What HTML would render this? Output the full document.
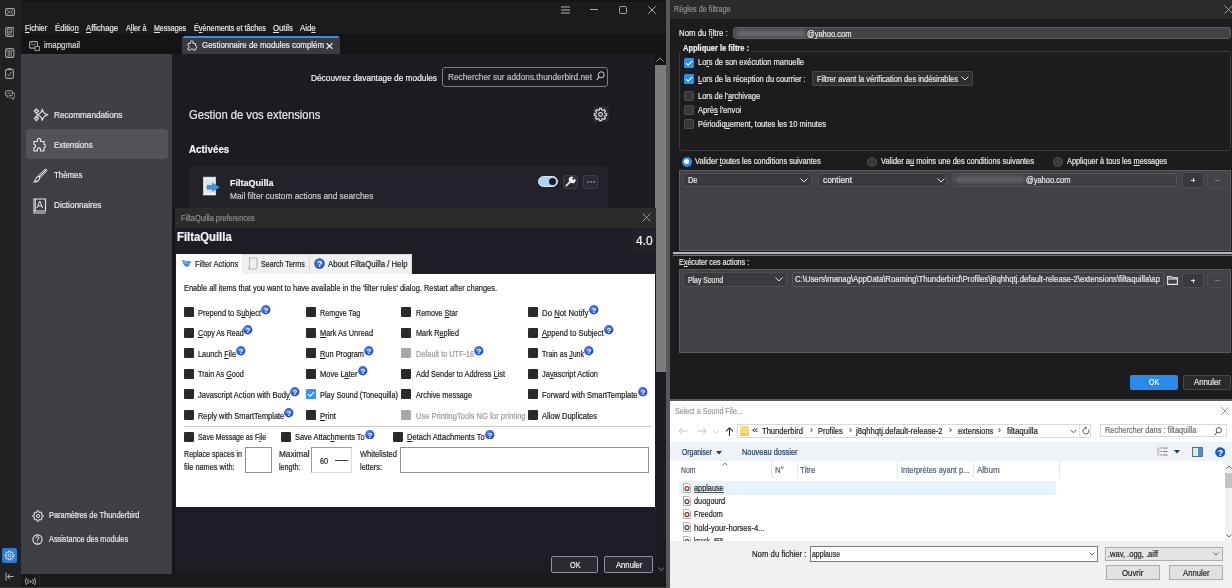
<!DOCTYPE html>
<html><head><meta charset="utf-8"><style>
html,body{margin:0;padding:0;width:1232px;height:588px;overflow:hidden;background:#1b1b1d;}
body>div,body>span,body>svg{position:absolute;box-sizing:border-box;}
.t{white-space:nowrap;-webkit-text-stroke:0.2px currentColor;line-height:1;transform-origin:0 0;font-family:"Liberation Sans",sans-serif;}
</style></head><body>
<div style="left:0px;top:0px;width:666px;height:588px;background:#1b1b1d;"></div>
<div style="left:0px;top:0px;width:666px;height:2px;background:#141416;"></div>
<div style="left:21px;top:34px;width:645px;height:20px;background:#141416;"></div>
<div style="left:0px;top:0px;width:21px;height:588px;background:#212123;"></div>
<svg style="left:4.5px;top:7.5px" width="10" height="8" viewBox="0 0 10 8"><rect x="0.6" y="0.6" width="8.8" height="6.8" rx="1.3" fill="none" stroke="#a4a4a6" stroke-width="1.1"/><path d="M2 2 L5 4.4 L8 2 M2 6 L3.8 4.3 M8 6 L6.2 4.3" stroke="#a4a4a6" stroke-width="0.9" fill="none"/></svg>
<svg style="left:4.5px;top:27px" width="9.5" height="10" viewBox="0 0 9.5 10"><rect x="0.6" y="0.6" width="8.3" height="8.8" rx="1.8" fill="none" stroke="#a4a4a6" stroke-width="1.1"/><path d="M2.6 2 V7.5 M2.6 2.2 H6.6 V6 M4.6 4.3 A1 1 0 1 0 4.61 4.3 M2.5 8 Q4.8 5.8 7 8" stroke="#a4a4a6" stroke-width="0.9" fill="none"/></svg>
<svg style="left:5px;top:48px" width="9.5" height="10" viewBox="0 0 9.5 10"><rect x="0.6" y="0.6" width="8.3" height="8.8" rx="2" fill="none" stroke="#a4a4a6" stroke-width="1.1"/><path d="M0.8 2.8 H8.7 M3.2 3 V8.5 M4.75 3 V8.5 M6.3 3 V8.5" stroke="#a4a4a6" stroke-width="0.8" fill="none"/></svg>
<svg style="left:5px;top:68px" width="9" height="11" viewBox="0 0 9 11"><rect x="0.6" y="1.4" width="7.8" height="9" rx="1.5" fill="none" stroke="#a4a4a6" stroke-width="1.1"/><rect x="2.8" y="0.3" width="3.4" height="2" rx="0.6" fill="#a4a4a6"/><path d="M2.6 6.2 L4 7.8 L6.4 3.8" stroke="#a4a4a6" stroke-width="0.9" fill="none"/></svg>
<svg style="left:4.5px;top:89.5px" width="10.5" height="10" viewBox="0 0 10.5 10"><path d="M1.2 0.8 H6.6 Q7.6 0.8 7.6 1.8 V4.6 Q7.6 5.6 6.6 5.6 H4 L2.3 7.3 V5.6 H1.2 Q0.6 5.6 0.6 4.8 V1.6 Q0.6 0.8 1.2 0.8 Z" fill="none" stroke="#a4a4a6" stroke-width="1"/><path d="M8.2 3 H9 Q9.8 3 9.8 3.8 V7 Q9.8 7.8 9 7.8 H8.4 V9.4 L6.6 7.8 H4.6" fill="none" stroke="#a4a4a6" stroke-width="0.9"/><path d="M2.2 3.2 H6" stroke="#a4a4a6" stroke-width="0.8"/></svg>
<div style="left:2px;top:548px;width:15px;height:15px;background:#2b7dd1;border-radius:2px"></div>
<svg style="left:4px;top:550px" width="11" height="11" viewBox="0 0 11 11"><path d="M4.70 2.30 L4.74 0.96 L6.26 0.96 L6.30 2.30 L7.20 2.67 L8.17 1.76 L9.24 2.83 L8.33 3.80 L8.70 4.70 L10.04 4.74 L10.04 6.26 L8.70 6.30 L8.33 7.20 L9.24 8.17 L8.17 9.24 L7.20 8.33 L6.30 8.70 L6.26 10.04 L4.74 10.04 L4.70 8.70 L3.80 8.33 L2.83 9.24 L1.76 8.17 L2.67 7.20 L2.30 6.30 L0.96 6.26 L0.96 4.74 L2.30 4.70 L2.67 3.80 L1.76 2.83 L2.83 1.76 L3.80 2.67 Z" fill="none" stroke="#d4e6f8" stroke-width="0.9" stroke-linejoin="round"/><circle cx="5.5" cy="5.5" r="1.4" fill="none" stroke="#d4e6f8" stroke-width="0.9"/></svg>
<svg style="left:5px;top:572px" width="9" height="9" viewBox="0 0 9 9"><path d="M1 0.5 V8.5 M2.5 4.5 H8.5 M2.5 4.5 L5 2 M2.5 4.5 L5 7" stroke="#b0b0b4" stroke-width="1" fill="none"/></svg>
<svg style="left:561px;top:6px" width="9" height="8" viewBox="0 0 9 8"><path d="M0 1 H9 M0 4 H9 M0 7 H9" stroke="#b4b4b6" stroke-width="1"/></svg>
<div style="left:590px;top:9px;width:8px;height:1px;background:#a8a8ab;"></div>
<svg style="left:619px;top:6px" width="8" height="8" viewBox="0 0 8 8"><rect x="0.5" y="0.5" width="7" height="7" rx="1" fill="none" stroke="#a8a8ab" stroke-width="1"/></svg>
<svg style="left:648px;top:6px" width="8" height="8" viewBox="0 0 8 8"><path d="M0.3 0.3 L7.7 7.7 M7.7 0.3 L0.3 7.7" stroke="#a8a8ab" stroke-width="1"/></svg>
<span id="t0" class="t" style="transform:scaleX(0.8606);left:25px;top:23.82px;font-size:8.6px;color:#e6e6e8;font-weight:400;font-family:"Liberation Sans", sans-serif;"><u>F</u>ichier</span>
<span id="t1" class="t" style="transform:scaleX(0.9018);left:54.7px;top:23.82px;font-size:8.6px;color:#e6e6e8;font-weight:400;font-family:"Liberation Sans", sans-serif;">Éditio<u>n</u></span>
<span id="t2" class="t" style="transform:scaleX(0.8967);left:86px;top:23.82px;font-size:8.6px;color:#e6e6e8;font-weight:400;font-family:"Liberation Sans", sans-serif;"><u>A</u>ffichage</span>
<span id="t3" class="t" style="transform:scaleX(0.8451);left:125.7px;top:23.82px;font-size:8.6px;color:#e6e6e8;font-weight:400;font-family:"Liberation Sans", sans-serif;">A<u>l</u>ler à</span>
<span id="t4" class="t" style="transform:scaleX(0.8191);left:153.9px;top:23.82px;font-size:8.6px;color:#e6e6e8;font-weight:400;font-family:"Liberation Sans", sans-serif;"><u>M</u>essages</span>
<span id="t5" class="t" style="transform:scaleX(0.8466);left:193.6px;top:23.82px;font-size:8.6px;color:#e6e6e8;font-weight:400;font-family:"Liberation Sans", sans-serif;">É<u>v</u>ènements et tâches</span>
<span id="t6" class="t" style="transform:scaleX(0.9006);left:273px;top:23.82px;font-size:8.6px;color:#e6e6e8;font-weight:400;font-family:"Liberation Sans", sans-serif;"><u>O</u>utils</span>
<span id="t7" class="t" style="transform:scaleX(0.9126);left:300.3px;top:23.82px;font-size:8.6px;color:#e6e6e8;font-weight:400;font-family:"Liberation Sans", sans-serif;">Aid<u>e</u></span>
<svg style="left:29px;top:41px" width="11" height="10" viewBox="0 0 11 10"><rect x="0.6" y="0.6" width="8" height="6.5" rx="1" fill="none" stroke="#a4a4a6" stroke-width="1.1"/><path d="M2 2.5 L4.6 4.3 L7.2 2.5" stroke="#a4a4a6" stroke-width="0.9" fill="none"/><rect x="6" y="5.5" width="4.5" height="4" fill="#141416" stroke="#a4a4a6" stroke-width="0.9"/></svg>
<span id="t8" class="t" style="transform:scaleX(0.9165);left:43.7px;top:41.22px;font-size:8.6px;color:#d8d8da;font-weight:400;font-family:"Liberation Sans", sans-serif;">imapgmail</span>
<div style="left:182px;top:36px;width:157.5px;height:18px;background:#3a3a41;border-radius:3px 3px 0 0"></div>
<div style="left:183px;top:36px;width:155.5px;height:2px;background:#3d8ee6;border-radius:2px 2px 0 0"></div>
<svg style="left:187px;top:40px" width="11" height="11" viewBox="0 0 11 11"><path d="M1 3.5 H3.5 V2 A1.2 1.2 0 0 1 6 2 V3.5 H8.5 V6 A1.2 1.2 0 0 1 8.5 8.5 V10 H6 A1.2 1.2 0 0 0 3.5 10 H1 V8 A1.2 1.2 0 0 0 1 5.5 Z" fill="none" stroke="#d8d8da" stroke-width="1"/></svg>
<span id="t9" class="t" style="transform:scaleX(0.9187);left:201.7px;top:41.32px;font-size:8.6px;color:#ececee;font-weight:400;font-family:"Liberation Sans", sans-serif;-webkit-mask-image:linear-gradient(90deg,#000 88%,transparent 100%);">Gestionnaire de modules complém</span>
<svg style="left:325.5px;top:42.5px" width="7" height="6" viewBox="0 0 7 6"><path d="M0.6 0.3 L6.4 5.7 M6.4 0.3 L0.6 5.7" stroke="#f0f0f2" stroke-width="1.3"/></svg>
<div style="left:21px;top:54px;width:151px;height:520px;background:#3f4046;"></div>
<div style="left:26px;top:129px;width:142px;height:30px;background:#525258;border-radius:4px"></div>
<svg style="left:30px;top:105px" width="20" height="20" viewBox="0 0 20 20"><path d="M12.3 4.200000000000001 Q13.200000000000001 8.9 17.9 9.8 Q13.200000000000001 10.700000000000001 12.3 15.4 Q11.4 10.700000000000001 6.700000000000001 9.8 Q11.4 8.9 12.3 4.200000000000001 Z" fill="none" stroke="#e8e8ea" stroke-width="1.1" stroke-linejoin="round"/><path d="M6.4 3.5999999999999996 Q6.9 5.6 8.9 6.1 Q6.9 6.6 6.4 8.6 Q5.9 6.6 3.9000000000000004 6.1 Q5.9 5.6 6.4 3.5999999999999996 Z" fill="none" stroke="#e8e8ea" stroke-width="1.1"/><path d="M6.4 11.0 Q6.9 13.0 8.9 13.5 Q6.9 14.0 6.4 16.0 Q5.9 14.0 3.9000000000000004 13.5 Q5.9 13.0 6.4 11.0 Z" fill="none" stroke="#e8e8ea" stroke-width="1.1"/></svg>
<span id="t10" class="t" style="transform:scaleX(0.9546);left:53.6px;top:110.52px;font-size:8.6px;color:#e8e8ea;font-weight:400;font-family:"Liberation Sans", sans-serif;">Recommandations</span>
<svg style="left:33px;top:137px" width="15" height="15" viewBox="0 0 15 15"><path d="M1 4.5 H4.5 V3 A1.6 1.6 0 0 1 7.7 3 V4.5 H11 V7.5 A1.6 1.6 0 0 1 11 10.7 V14 H7.5 V12.5 A1.6 1.6 0 0 0 4.3 12.5 V14 H1 V10.5 A1.6 1.6 0 0 0 1 7.3 Z" fill="none" stroke="#e8e8ea" stroke-width="1.1"/></svg>
<span id="t11" class="t" style="transform:scaleX(0.9180);left:53.6px;top:140.92px;font-size:8.6px;color:#e8e8ea;font-weight:400;font-family:"Liberation Sans", sans-serif;">Extensions</span>
<svg style="left:33px;top:168px" width="15" height="15" viewBox="0 0 15 15"><path d="M13.5 1.5 L6 9 M12.5 1 L14 2.5 L7 10 L5 8 Z" fill="none" stroke="#e8e8ea" stroke-width="1"/><path d="M5 8.5 Q3 9 2.5 12 L1 14 Q4 14 5.5 12.5 Q6.5 11.5 6.5 10" fill="none" stroke="#e8e8ea" stroke-width="1.1"/></svg>
<span id="t12" class="t" style="transform:scaleX(0.9147);left:53.6px;top:171.12px;font-size:8.6px;color:#e8e8ea;font-weight:400;font-family:"Liberation Sans", sans-serif;">Thèmes</span>
<svg style="left:33px;top:198px" width="14" height="16" viewBox="0 0 14 16"><path d="M1 1 H12.5 V13 H1 Z M1 13 V15 H12.5" fill="none" stroke="#e8e8ea" stroke-width="1.1"/><path d="M4 10 L6.8 3 L9.6 10 M5 8 H8.6" fill="none" stroke="#e8e8ea" stroke-width="1"/><path d="M2.5 1 V13" stroke="#e8e8ea" stroke-width="0.8"/></svg>
<span id="t13" class="t" style="transform:scaleX(0.9540);left:53.6px;top:201.22px;font-size:8.6px;color:#e8e8ea;font-weight:400;font-family:"Liberation Sans", sans-serif;">Dictionnaires</span>
<svg style="left:31.5px;top:509.5px" width="12" height="12" viewBox="0 0 12 12"><path d="M5.08 2.31 L5.15 0.87 L6.85 0.87 L6.92 2.31 L7.96 2.74 L9.02 1.77 L10.23 2.98 L9.26 4.04 L9.69 5.08 L11.13 5.15 L11.13 6.85 L9.69 6.92 L9.26 7.96 L10.23 9.02 L9.02 10.23 L7.96 9.26 L6.92 9.69 L6.85 11.13 L5.15 11.13 L5.08 9.69 L4.04 9.26 L2.98 10.23 L1.77 9.02 L2.74 7.96 L2.31 6.92 L0.87 6.85 L0.87 5.15 L2.31 5.08 L2.74 4.04 L1.77 2.98 L2.98 1.77 L4.04 2.74 Z" fill="none" stroke="#e8e8ea" stroke-width="1" stroke-linejoin="round"/><circle cx="6" cy="6" r="1.6" fill="none" stroke="#e8e8ea" stroke-width="1"/></svg>
<span id="t14" class="t" style="transform:scaleX(0.8624);left:48.5px;top:510.72px;font-size:8.6px;color:#e8e8ea;font-weight:400;font-family:"Liberation Sans", sans-serif;">Paramètres de Thunderbird</span>
<svg style="left:32px;top:534px" width="11" height="11" viewBox="0 0 11 11"><circle cx="5.5" cy="5.5" r="4.6" fill="none" stroke="#e8e8ea" stroke-width="1.1"/><path d="M4 4.2 Q4 2.6 5.5 2.6 Q7 2.6 7 4 Q7 5 5.5 5.6 V6.8 M5.5 7.8 V8.6" fill="none" stroke="#e8e8ea" stroke-width="1"/></svg>
<span id="t15" class="t" style="transform:scaleX(0.8535);left:48.5px;top:534.72px;font-size:8.6px;color:#e8e8ea;font-weight:400;font-family:"Liberation Sans", sans-serif;">Assistance des modules</span>
<div style="left:172px;top:54px;width:483px;height:520px;background:#1c1b22;"></div>
<span id="t16" class="t" style="transform:scaleX(0.9661);left:311px;top:73.72px;font-size:8.6px;color:#f0f0f2;font-weight:400;font-family:"Liberation Sans", sans-serif;">Découvrez davantage de modules</span>
<div style="left:442px;top:67px;width:166px;height:20px;background:#1c1b22;border:1px solid #7c7c86;border-radius:3px;"></div>
<span id="t17" class="t" style="transform:scaleX(0.9630);left:448px;top:73.32px;font-size:8.6px;color:#bdbdc4;font-weight:400;font-family:"Liberation Sans", sans-serif;">Rechercher sur addons.thunderbird.net</span>
<svg style="left:596px;top:71px" width="9" height="10" viewBox="0 0 9 10"><circle cx="5.2" cy="3.8" r="3" fill="none" stroke="#cfcfd4" stroke-width="1"/><path d="M3 6 L0.7 8.8" stroke="#cfcfd4" stroke-width="1.1"/></svg>
<span id="t18" class="t" style="transform:scaleX(0.9110);left:189px;top:108.79px;font-size:12.3px;color:#e6e6ea;font-weight:400;font-family:"Liberation Sans", sans-serif;-webkit-text-stroke:0">Gestion de vos extensions</span>
<div style="left:593px;top:106px;width:16px;height:16px;background:#2b2a33;border-radius:3px"></div>
<svg style="left:593px;top:107px" width="15" height="15" viewBox="0 0 15 15"><path d="M6.39 3.04 L6.48 1.38 L8.52 1.38 L8.61 3.04 L9.87 3.56 L11.10 2.46 L12.54 3.90 L11.44 5.13 L11.96 6.39 L13.62 6.48 L13.62 8.52 L11.96 8.61 L11.44 9.87 L12.54 11.10 L11.10 12.54 L9.87 11.44 L8.61 11.96 L8.52 13.62 L6.48 13.62 L6.39 11.96 L5.13 11.44 L3.90 12.54 L2.46 11.10 L3.56 9.87 L3.04 8.61 L1.38 8.52 L1.38 6.48 L3.04 6.39 L3.56 5.13 L2.46 3.90 L3.90 2.46 L5.13 3.56 Z" fill="none" stroke="#e0e0e4" stroke-width="1.1" stroke-linejoin="round"/><circle cx="7.5" cy="7.5" r="1.9" fill="none" stroke="#e0e0e4" stroke-width="1.1"/></svg>
<span id="t19" class="t" style="transform:scaleX(0.9328);left:189px;top:143.51px;font-size:10.5px;color:#f4f4f6;font-weight:700;font-family:"Liberation Sans", sans-serif;">Activées</span>
<div style="left:189px;top:166px;width:419px;height:42px;background:#23222b;border-radius:4px 4px 0 0"></div>
<svg style="left:202px;top:176px" width="19" height="20" viewBox="0 0 19 20"><path d="M1 1.2 H14 L13.5 2 V18 L14 19 H1 L1.5 18 V2 Z" fill="#f4f8f8" stroke="#e8eeee" stroke-width="0.6"/><rect x="2.8" y="2.8" width="9.6" height="14.4" fill="#d9e5e5"/><path d="M5 9.3 H10.5 V7 L17.6 11.3 L10.5 15.6 V13.3 H5 Z" fill="#3d93e0" stroke="#2f7fcc" stroke-width="0.5"/></svg>
<span id="t20" class="t" style="transform:scaleX(0.9355);left:229.8px;top:178.27px;font-size:9.6px;color:#f2f2f4;font-weight:700;font-family:"Liberation Sans", sans-serif;">FiltaQuilla</span>
<span id="t21" class="t" style="transform:scaleX(0.9684);left:229.8px;top:191.82px;font-size:8.6px;color:#c8c8ce;font-weight:400;font-family:"Liberation Sans", sans-serif;">Mail filter custom actions and searches</span>
<div style="left:537.5px;top:176.3px;width:20.5px;height:10.7px;background:#a9d2f9;border-radius:6px;border:1px solid #d6eafc"></div>
<div style="left:549.1px;top:178px;width:7.2px;height:7.2px;background:#1c1b22;border-radius:50%"></div>
<div style="left:563px;top:174.5px;width:15px;height:14.5px;background:#2b2a33;border-radius:3px;border:1px solid #3f3e47"></div>
<svg style="left:565px;top:176px" width="11" height="11" viewBox="0 0 11 11"><path d="M1.2 9.8 L5.6 5.4" stroke="#f0f0f2" stroke-width="1.6" stroke-linecap="round"/><path d="M5 6 A3 3 0 0 1 8.6 1.2 L7 2.8 L8.2 4 L9.8 2.4 A3 3 0 0 1 5 6 Z" fill="#f0f0f2"/></svg>
<div style="left:583px;top:174.5px;width:15px;height:14.5px;background:#2b2a33;border-radius:3px;border:1px solid #3f3e47"></div>
<svg style="left:587px;top:181px" width="8" height="2" viewBox="0 0 8 2"><circle cx="1" cy="1" r="0.7" fill="#e0e0e4"/><circle cx="4" cy="1" r="0.7" fill="#e0e0e4"/><circle cx="7" cy="1" r="0.7" fill="#e0e0e4"/></svg>
<div style="left:655px;top:54px;width:11px;height:11px;background:#141416;"></div>
<div style="left:655px;top:372px;width:11px;height:202px;background:#1c1b22;"></div>
<div style="left:655px;top:65px;width:11px;height:307px;background:#7b7b7f;"></div>
<svg style="left:656px;top:57px" width="8" height="5" viewBox="0 0 8 5"><path d="M0.5 4.5 L4 1 L7.5 4.5" fill="none" stroke="#9a9a9e" stroke-width="1"/></svg>
<svg style="left:657.5px;top:566.5px" width="6.5" height="4.5" viewBox="0 0 6.5 4.5"><path d="M0.5 0.5 L3.25 3.6 L6 0.5" fill="none" stroke="#8a8a8e" stroke-width="0.9"/></svg>
<div style="left:662.5px;top:575px;width:1px;height:11px;background:#2a2a2e;"></div>
<div style="left:665.5px;top:0px;width:3.5px;height:588px;background:#58585b;"></div>
<div style="left:21px;top:574px;width:645px;height:13px;background:#19191b;"></div>
<div style="left:0px;top:587px;width:666px;height:1px;background:#3a3a3c;"></div>
<div style="left:39px;top:574px;width:1px;height:14px;background:#2a2a2e;"></div>
<svg style="left:24px;top:577px" width="13" height="9" viewBox="0 0 13 9"><circle cx="6.5" cy="4.5" r="1.1" fill="#c0c0c4"/><path d="M4.3 2 Q3 4.5 4.3 7 M8.7 2 Q10 4.5 8.7 7 M2.4 0.8 Q0.5 4.5 2.4 8.2 M10.6 0.8 Q12.5 4.5 10.6 8.2" fill="none" stroke="#c0c0c4" stroke-width="0.9"/></svg>
<div style="left:172px;top:208px;width:3px;height:366px;background:#161618;"></div>
<div style="left:175px;top:208px;width:481px;height:20px;background:#2b2b2b;"></div>
<span id="t22" class="t" style="transform:scaleX(0.8583);left:181.2px;top:213.72px;font-size:8.6px;color:#8e8e8e;font-weight:400;font-family:"Liberation Sans", sans-serif;-webkit-text-stroke:0">FiltaQuilla preferences</span>
<svg style="left:642px;top:213px" width="9" height="9" viewBox="0 0 9 9"><path d="M0.5 0.5 L8.5 8.5 M8.5 0.5 L0.5 8.5" stroke="#9a9a9a" stroke-width="1"/></svg>
<div style="left:175px;top:228px;width:481px;height:346px;background:#1e1d25;"></div>
<span id="t23" class="t" style="transform:scaleX(0.9428);left:176.5px;top:231.34px;font-size:12px;color:#f4f4f6;font-weight:700;font-family:"Liberation Sans", sans-serif;">FiltaQuilla</span>
<div style="left:633px;top:228px;width:22px;height:23px;background:#23222a;"></div>
<span id="t24" class="t" style="transform:scaleX(0.9702);left:635.7px;top:235.19px;font-size:12.3px;color:#f4f4f6;font-weight:400;font-family:"Liberation Sans", sans-serif;">4.0</span>
<div style="left:176px;top:254px;width:66px;height:20px;background:#ffffff;"></div>
<div style="left:242px;top:254px;width:67.5px;height:20px;background:#f0f0f0;border-top:1px solid #dadada;border-right:1px solid #dadada"></div>
<div style="left:309.5px;top:254px;width:102.3px;height:20px;background:#f0f0f0;border-top:1px solid #dadada;border-right:1px solid #dadada"></div>
<svg style="left:181px;top:259px" width="11" height="9" viewBox="0 0 11 9"><path d="M0.5 1.5 Q3 0 5 2.5 Q7 1 10.5 3 L8.5 4.5 Q9 7 6 8 Q3 7.5 2.5 5 Z" fill="#3b95d6"/><path d="M1 1.5 Q4 4 6.5 4.5" stroke="#a8d4f2" stroke-width="0.8" fill="none"/></svg>
<span id="t25" class="t" style="transform:scaleX(0.8800);left:194.5px;top:260.12px;font-size:8.6px;color:#1e1e1e;font-weight:400;font-family:"Liberation Sans", sans-serif;">Filter Actions</span>
<svg style="left:247px;top:257px" width="11" height="13" viewBox="0 0 11 13"><path d="M2 1 H10 V11 Q10 12 9 12 H1.5 Q2.5 11.5 2.5 10.5 V1.5 Z" fill="#eef3f1" stroke="#9aaba4" stroke-width="0.8"/><path d="M1 10.5 H2.5" stroke="#9aaba4" stroke-width="0.8"/></svg>
<span id="t26" class="t" style="transform:scaleX(0.8267);left:261px;top:260.12px;font-size:8.6px;color:#1e1e1e;font-weight:400;font-family:"Liberation Sans", sans-serif;">Search Terms</span>
<svg style="left:314px;top:258px" width="11" height="11" viewBox="0 0 11 11"><circle cx="5.5" cy="5.5" r="5.2" fill="#1f4cc0"/><circle cx="5.2" cy="5" r="4" fill="#3a6ddc"/><text x="5.5" y="8.8" text-anchor="middle" font-family="Liberation Sans" font-weight="700" font-size="8.5" fill="#fff">?</text></svg>
<span id="t27" class="t" style="transform:scaleX(0.9045);left:328px;top:260.12px;font-size:8.6px;color:#1e1e1e;font-weight:400;font-family:"Liberation Sans", sans-serif;">About FiltaQuilla / Help</span>
<div style="left:176px;top:273.5px;width:479px;height:233px;background:#ffffff;"></div>
<span id="t28" class="t" style="transform:scaleX(0.8645);left:184px;top:283.92px;font-size:8.6px;color:#1e1e1e;font-weight:400;font-family:"Liberation Sans", sans-serif;">Enable all items that you want to have available in the 'filter rules' dialog. Restart after changes.</span>
<div style="left:184px;top:307px;width:10px;height:10px;background:#2a2a2c;border-radius:1px"></div>
<span id="t29" class="t" style="transform:scaleX(0.8617);left:197.6px;top:308.72px;font-size:8.6px;color:#1e1e1e;font-weight:400;font-family:"Liberation Sans", sans-serif;">Prepend to S<u>u</u>bject</span>
<svg style="left:261px;top:305px" width="9.5" height="9.5" viewBox="0 0 10 10"><defs><radialGradient id="qg1" cx="0.4" cy="0.35" r="0.65"><stop offset="0" stop-color="#5b8cf0"/><stop offset="1" stop-color="#1c46bd"/></radialGradient></defs><circle cx="5" cy="5" r="4.9" fill="url(#qg1)"/><text x="5.1" y="8.3" text-anchor="middle" font-family="Liberation Sans" font-weight="700" font-size="8.4" fill="#fff">?</text></svg>
<div style="left:184px;top:328px;width:10px;height:10px;background:#2a2a2c;border-radius:1px"></div>
<span id="t30" class="t" style="transform:scaleX(0.8334);left:197.6px;top:329.22px;font-size:8.6px;color:#1e1e1e;font-weight:400;font-family:"Liberation Sans", sans-serif;"><u>C</u>opy As Read</span>
<svg style="left:243px;top:325px" width="9.5" height="9.5" viewBox="0 0 10 10"><defs><radialGradient id="qg2" cx="0.4" cy="0.35" r="0.65"><stop offset="0" stop-color="#5b8cf0"/><stop offset="1" stop-color="#1c46bd"/></radialGradient></defs><circle cx="5" cy="5" r="4.9" fill="url(#qg2)"/><text x="5.1" y="8.3" text-anchor="middle" font-family="Liberation Sans" font-weight="700" font-size="8.4" fill="#fff">?</text></svg>
<div style="left:184px;top:348px;width:10px;height:10px;background:#2a2a2c;border-radius:1px"></div>
<span id="t31" class="t" style="transform:scaleX(0.8548);left:197.6px;top:349.82px;font-size:8.6px;color:#1e1e1e;font-weight:400;font-family:"Liberation Sans", sans-serif;">Launch <u>F</u>ile</span>
<svg style="left:236px;top:346px" width="9.5" height="9.5" viewBox="0 0 10 10"><defs><radialGradient id="qg3" cx="0.4" cy="0.35" r="0.65"><stop offset="0" stop-color="#5b8cf0"/><stop offset="1" stop-color="#1c46bd"/></radialGradient></defs><circle cx="5" cy="5" r="4.9" fill="url(#qg3)"/><text x="5.1" y="8.3" text-anchor="middle" font-family="Liberation Sans" font-weight="700" font-size="8.4" fill="#fff">?</text></svg>
<div style="left:184px;top:369px;width:10px;height:10px;background:#2a2a2c;border-radius:1px"></div>
<span id="t32" class="t" style="transform:scaleX(0.8384);left:197.6px;top:370.22px;font-size:8.6px;color:#1e1e1e;font-weight:400;font-family:"Liberation Sans", sans-serif;">Train As <u>G</u>ood</span>
<div style="left:184px;top:389px;width:10px;height:10px;background:#2a2a2c;border-radius:1px"></div>
<span id="t33" class="t" style="transform:scaleX(0.8815);left:197.6px;top:390.72px;font-size:8.6px;color:#1e1e1e;font-weight:400;font-family:"Liberation Sans", sans-serif;">Javascript Action with Bod<u>y</u></span>
<svg style="left:290px;top:387px" width="9.5" height="9.5" viewBox="0 0 10 10"><defs><radialGradient id="qg4" cx="0.4" cy="0.35" r="0.65"><stop offset="0" stop-color="#5b8cf0"/><stop offset="1" stop-color="#1c46bd"/></radialGradient></defs><circle cx="5" cy="5" r="4.9" fill="url(#qg4)"/><text x="5.1" y="8.3" text-anchor="middle" font-family="Liberation Sans" font-weight="700" font-size="8.4" fill="#fff">?</text></svg>
<div style="left:184px;top:410px;width:10px;height:10px;background:#2a2a2c;border-radius:1px"></div>
<span id="t34" class="t" style="transform:scaleX(0.8635);left:197.6px;top:411.72px;font-size:8.6px;color:#1e1e1e;font-weight:400;font-family:"Liberation Sans", sans-serif;">Reply with SmartTemplate</span>
<svg style="left:284px;top:408px" width="9.5" height="9.5" viewBox="0 0 10 10"><defs><radialGradient id="qg5" cx="0.4" cy="0.35" r="0.65"><stop offset="0" stop-color="#5b8cf0"/><stop offset="1" stop-color="#1c46bd"/></radialGradient></defs><circle cx="5" cy="5" r="4.9" fill="url(#qg5)"/><text x="5.1" y="8.3" text-anchor="middle" font-family="Liberation Sans" font-weight="700" font-size="8.4" fill="#fff">?</text></svg>
<div style="left:306px;top:307px;width:10px;height:10px;background:#2a2a2c;border-radius:1px"></div>
<span id="t35" class="t" style="transform:scaleX(0.8356);left:319.9px;top:308.72px;font-size:8.6px;color:#1e1e1e;font-weight:400;font-family:"Liberation Sans", sans-serif;">Rem<u>o</u>ve Tag</span>
<div style="left:306px;top:328px;width:10px;height:10px;background:#2a2a2c;border-radius:1px"></div>
<span id="t36" class="t" style="transform:scaleX(0.8598);left:319.9px;top:329.22px;font-size:8.6px;color:#1e1e1e;font-weight:400;font-family:"Liberation Sans", sans-serif;"><u>M</u>ark As Unread</span>
<div style="left:306px;top:348px;width:10px;height:10px;background:#2a2a2c;border-radius:1px"></div>
<span id="t37" class="t" style="transform:scaleX(0.8606);left:319.9px;top:349.82px;font-size:8.6px;color:#1e1e1e;font-weight:400;font-family:"Liberation Sans", sans-serif;"><u>R</u>un Program</span>
<svg style="left:364px;top:346px" width="9.5" height="9.5" viewBox="0 0 10 10"><defs><radialGradient id="qg6" cx="0.4" cy="0.35" r="0.65"><stop offset="0" stop-color="#5b8cf0"/><stop offset="1" stop-color="#1c46bd"/></radialGradient></defs><circle cx="5" cy="5" r="4.9" fill="url(#qg6)"/><text x="5.1" y="8.3" text-anchor="middle" font-family="Liberation Sans" font-weight="700" font-size="8.4" fill="#fff">?</text></svg>
<div style="left:306px;top:369px;width:10px;height:10px;background:#2a2a2c;border-radius:1px"></div>
<span id="t38" class="t" style="transform:scaleX(0.8721);left:319.9px;top:370.22px;font-size:8.6px;color:#1e1e1e;font-weight:400;font-family:"Liberation Sans", sans-serif;">Move L<u>a</u>ter</span>
<svg style="left:358px;top:366px" width="9.5" height="9.5" viewBox="0 0 10 10"><defs><radialGradient id="qg7" cx="0.4" cy="0.35" r="0.65"><stop offset="0" stop-color="#5b8cf0"/><stop offset="1" stop-color="#1c46bd"/></radialGradient></defs><circle cx="5" cy="5" r="4.9" fill="url(#qg7)"/><text x="5.1" y="8.3" text-anchor="middle" font-family="Liberation Sans" font-weight="700" font-size="8.4" fill="#fff">?</text></svg>
<div style="left:306px;top:389px;width:10px;height:10px;background:#3393f0;border-radius:1px"></div>
<svg style="left:306px;top:389px" width="10" height="10" viewBox="0 0 10 10"><path d="M2 5.2 L4.1 7.3 L8.2 2.8" fill="none" stroke="#fff" stroke-width="1.1"/></svg>
<span id="t39" class="t" style="transform:scaleX(0.8592);left:319.9px;top:390.72px;font-size:8.6px;color:#1e1e1e;font-weight:400;font-family:"Liberation Sans", sans-serif;">Play Sound (Tonequilla)</span>
<div style="left:306px;top:410px;width:10px;height:10px;background:#2a2a2c;border-radius:1px"></div>
<span id="t40" class="t" style="transform:scaleX(0.9046);left:319.9px;top:411.72px;font-size:8.6px;color:#1e1e1e;font-weight:400;font-family:"Liberation Sans", sans-serif;"><u>P</u>rint</span>
<div style="left:401px;top:307px;width:10px;height:10px;background:#2a2a2c;border-radius:1px"></div>
<span id="t41" class="t" style="transform:scaleX(0.8274);left:415.5px;top:308.72px;font-size:8.6px;color:#1e1e1e;font-weight:400;font-family:"Liberation Sans", sans-serif;">Remove <u>S</u>tar</span>
<div style="left:401px;top:328px;width:10px;height:10px;background:#2a2a2c;border-radius:1px"></div>
<span id="t42" class="t" style="transform:scaleX(0.8489);left:415.5px;top:329.22px;font-size:8.6px;color:#1e1e1e;font-weight:400;font-family:"Liberation Sans", sans-serif;">Mark R<u>e</u>plied</span>
<div style="left:401px;top:348px;width:10px;height:10px;background:#a8a8a8;border-radius:1px"></div>
<span id="t43" class="t" style="transform:scaleX(0.8492);left:415.5px;top:349.82px;font-size:8.6px;color:#9a9a9a;font-weight:400;font-family:"Liberation Sans", sans-serif;">Default to UTF-16</span>
<svg style="left:474px;top:346px" width="9.5" height="9.5" viewBox="0 0 10 10"><defs><radialGradient id="qg8" cx="0.4" cy="0.35" r="0.65"><stop offset="0" stop-color="#5b8cf0"/><stop offset="1" stop-color="#1c46bd"/></radialGradient></defs><circle cx="5" cy="5" r="4.9" fill="url(#qg8)"/><text x="5.1" y="8.3" text-anchor="middle" font-family="Liberation Sans" font-weight="700" font-size="8.4" fill="#fff">?</text></svg>
<div style="left:401px;top:369px;width:10px;height:10px;background:#2a2a2c;border-radius:1px"></div>
<span id="t44" class="t" style="transform:scaleX(0.8545);left:415.5px;top:370.22px;font-size:8.6px;color:#1e1e1e;font-weight:400;font-family:"Liberation Sans", sans-serif;">Add Sender to Address <u>L</u>ist</span>
<div style="left:401px;top:389px;width:10px;height:10px;background:#2a2a2c;border-radius:1px"></div>
<span id="t45" class="t" style="transform:scaleX(0.8495);left:415.5px;top:390.72px;font-size:8.6px;color:#1e1e1e;font-weight:400;font-family:"Liberation Sans", sans-serif;">Archive message</span>
<div style="left:401px;top:410px;width:10px;height:10px;background:#a8a8a8;border-radius:1px"></div>
<span id="t46" class="t" style="transform:scaleX(0.8750);left:415.5px;top:411.72px;font-size:8.6px;color:#9a9a9a;font-weight:400;font-family:"Liberation Sans", sans-serif;">Use PrintingTools NG for printing</span>
<div style="left:528px;top:307px;width:10px;height:10px;background:#2a2a2c;border-radius:1px"></div>
<span id="t47" class="t" style="transform:scaleX(0.9076);left:542.2px;top:308.72px;font-size:8.6px;color:#1e1e1e;font-weight:400;font-family:"Liberation Sans", sans-serif;">Do <u>N</u>ot Notify</span>
<svg style="left:589px;top:305px" width="9.5" height="9.5" viewBox="0 0 10 10"><defs><radialGradient id="qg9" cx="0.4" cy="0.35" r="0.65"><stop offset="0" stop-color="#5b8cf0"/><stop offset="1" stop-color="#1c46bd"/></radialGradient></defs><circle cx="5" cy="5" r="4.9" fill="url(#qg9)"/><text x="5.1" y="8.3" text-anchor="middle" font-family="Liberation Sans" font-weight="700" font-size="8.4" fill="#fff">?</text></svg>
<div style="left:528px;top:328px;width:10px;height:10px;background:#2a2a2c;border-radius:1px"></div>
<span id="t48" class="t" style="transform:scaleX(0.8769);left:542.2px;top:329.22px;font-size:8.6px;color:#1e1e1e;font-weight:400;font-family:"Liberation Sans", sans-serif;"><u>A</u>ppend to Subject</span>
<svg style="left:604px;top:325px" width="9.5" height="9.5" viewBox="0 0 10 10"><defs><radialGradient id="qg10" cx="0.4" cy="0.35" r="0.65"><stop offset="0" stop-color="#5b8cf0"/><stop offset="1" stop-color="#1c46bd"/></radialGradient></defs><circle cx="5" cy="5" r="4.9" fill="url(#qg10)"/><text x="5.1" y="8.3" text-anchor="middle" font-family="Liberation Sans" font-weight="700" font-size="8.4" fill="#fff">?</text></svg>
<div style="left:528px;top:348px;width:10px;height:10px;background:#2a2a2c;border-radius:1px"></div>
<span id="t49" class="t" style="transform:scaleX(0.8190);left:542.2px;top:349.82px;font-size:8.6px;color:#1e1e1e;font-weight:400;font-family:"Liberation Sans", sans-serif;">Train as <u>J</u>unk</span>
<svg style="left:584px;top:346px" width="9.5" height="9.5" viewBox="0 0 10 10"><defs><radialGradient id="qg11" cx="0.4" cy="0.35" r="0.65"><stop offset="0" stop-color="#5b8cf0"/><stop offset="1" stop-color="#1c46bd"/></radialGradient></defs><circle cx="5" cy="5" r="4.9" fill="url(#qg11)"/><text x="5.1" y="8.3" text-anchor="middle" font-family="Liberation Sans" font-weight="700" font-size="8.4" fill="#fff">?</text></svg>
<div style="left:528px;top:369px;width:10px;height:10px;background:#2a2a2c;border-radius:1px"></div>
<span id="t50" class="t" style="transform:scaleX(0.8684);left:542.2px;top:370.22px;font-size:8.6px;color:#1e1e1e;font-weight:400;font-family:"Liberation Sans", sans-serif;">Ja<u>v</u>ascript Action</span>
<div style="left:528px;top:389px;width:10px;height:10px;background:#2a2a2c;border-radius:1px"></div>
<span id="t51" class="t" style="transform:scaleX(0.8731);left:542.2px;top:390.72px;font-size:8.6px;color:#1e1e1e;font-weight:400;font-family:"Liberation Sans", sans-serif;">Forward with SmartTemplate</span>
<svg style="left:638px;top:387px" width="9.5" height="9.5" viewBox="0 0 10 10"><defs><radialGradient id="qg12" cx="0.4" cy="0.35" r="0.65"><stop offset="0" stop-color="#5b8cf0"/><stop offset="1" stop-color="#1c46bd"/></radialGradient></defs><circle cx="5" cy="5" r="4.9" fill="url(#qg12)"/><text x="5.1" y="8.3" text-anchor="middle" font-family="Liberation Sans" font-weight="700" font-size="8.4" fill="#fff">?</text></svg>
<div style="left:528px;top:410px;width:10px;height:10px;background:#2a2a2c;border-radius:1px"></div>
<span id="t52" class="t" style="transform:scaleX(0.8722);left:542.2px;top:411.72px;font-size:8.6px;color:#1e1e1e;font-weight:400;font-family:"Liberation Sans", sans-serif;">Allow Duplicates</span>
<div style="left:184px;top:426px;width:467px;height:1px;background:#c8c8c8;"></div>
<div style="left:184px;top:432px;width:10px;height:10px;background:#2a2a2c;border-radius:1px"></div>
<span id="t53" class="t" style="transform:scaleX(0.8052);left:197.8px;top:433.22px;font-size:8.6px;color:#1e1e1e;font-weight:400;font-family:"Liberation Sans", sans-serif;">Save Message as F<u>i</u>le</span>
<div style="left:281px;top:432px;width:10px;height:10px;background:#2a2a2c;border-radius:1px"></div>
<span id="t54" class="t" style="transform:scaleX(0.8648);left:294.7px;top:433.22px;font-size:8.6px;color:#1e1e1e;font-weight:400;font-family:"Liberation Sans", sans-serif;">Save Attac<u>h</u>ments To</span>
<svg style="left:365px;top:429.5px" width="9.5" height="9.5" viewBox="0 0 10 10"><defs><radialGradient id="qg13" cx="0.4" cy="0.35" r="0.65"><stop offset="0" stop-color="#5b8cf0"/><stop offset="1" stop-color="#1c46bd"/></radialGradient></defs><circle cx="5" cy="5" r="4.9" fill="url(#qg13)"/><text x="5.1" y="8.3" text-anchor="middle" font-family="Liberation Sans" font-weight="700" font-size="8.4" fill="#fff">?</text></svg>
<div style="left:393px;top:432px;width:10px;height:10px;background:#2a2a2c;border-radius:1px"></div>
<span id="t55" class="t" style="transform:scaleX(0.8806);left:407px;top:433.22px;font-size:8.6px;color:#1e1e1e;font-weight:400;font-family:"Liberation Sans", sans-serif;"><u>D</u>etach Attachments To</span>
<svg style="left:485px;top:429.5px" width="9.5" height="9.5" viewBox="0 0 10 10"><defs><radialGradient id="qg14" cx="0.4" cy="0.35" r="0.65"><stop offset="0" stop-color="#5b8cf0"/><stop offset="1" stop-color="#1c46bd"/></radialGradient></defs><circle cx="5" cy="5" r="4.9" fill="url(#qg14)"/><text x="5.1" y="8.3" text-anchor="middle" font-family="Liberation Sans" font-weight="700" font-size="8.4" fill="#fff">?</text></svg>
<span id="t56" class="t" style="transform:scaleX(0.8258);left:184px;top:449.72px;font-size:8.6px;color:#1e1e1e;font-weight:400;font-family:"Liberation Sans", sans-serif;">Replace spaces in</span>
<span id="t57" class="t" style="transform:scaleX(0.8542);left:184px;top:463.02px;font-size:8.6px;color:#1e1e1e;font-weight:400;font-family:"Liberation Sans", sans-serif;">file names with:</span>
<div style="left:245px;top:447.3px;width:27px;height:25.6px;background:#fff;border:1px solid #8f8f8f;border-radius:0px;"></div>
<span id="t58" class="t" style="transform:scaleX(0.9563);left:278.7px;top:449.72px;font-size:8.6px;color:#1e1e1e;font-weight:400;font-family:"Liberation Sans", sans-serif;">Maximal</span>
<span id="t59" class="t" style="transform:scaleX(0.8368);left:278.7px;top:463.02px;font-size:8.6px;color:#1e1e1e;font-weight:400;font-family:"Liberation Sans", sans-serif;">length:</span>
<div style="left:310.7px;top:447.3px;width:41.5px;height:25.6px;background:#fff;border-top:1.5px solid #9c9c9c;border-left:1.5px solid #9c9c9c;border-right:1px solid #dadada;border-bottom:1px solid #dadada"></div>
<span id="t60" class="t" style="transform:scaleX(0.8575);left:320px;top:456.72px;font-size:8.6px;color:#1e1e1e;font-weight:400;font-family:"Liberation Sans", sans-serif;">60</span>
<div style="left:335px;top:459.8px;width:13px;height:1px;background:#3a3a3a;"></div>
<span id="t61" class="t" style="transform:scaleX(0.8779);left:359.6px;top:449.72px;font-size:8.6px;color:#1e1e1e;font-weight:400;font-family:"Liberation Sans", sans-serif;">Whitelisted</span>
<span id="t62" class="t" style="transform:scaleX(0.8528);left:359.6px;top:463.02px;font-size:8.6px;color:#1e1e1e;font-weight:400;font-family:"Liberation Sans", sans-serif;">letters:</span>
<div style="left:399.5px;top:447.3px;width:249.2px;height:25.6px;background:#fff;border:1px solid #8f8f8f;border-radius:0px;"></div>
<div style="left:551px;top:556px;width:47.3px;height:16.7px;background:#2b2a33;border:1px solid #8f8f9d;border-radius:2px;"></div>
<span id="t63" class="t" style="transform:scaleX(0.8453);left:569.5px;top:560.92px;font-size:8.6px;color:#f0f0f2;font-weight:400;font-family:"Liberation Sans", sans-serif;">OK</span>
<div style="left:604px;top:556px;width:48.7px;height:16.7px;background:#2b2a33;border:1px solid #8f8f9d;border-radius:2px;"></div>
<span id="t64" class="t" style="transform:scaleX(0.8911);left:615.5px;top:560.92px;font-size:8.6px;color:#f0f0f2;font-weight:400;font-family:"Liberation Sans", sans-serif;">Annuler</span>
<div style="left:669px;top:0px;width:563px;height:399px;background:#1c1b1e;"></div>
<div style="left:669px;top:0px;width:563px;height:19px;background:#2b2b2b;"></div>
<span id="t65" class="t" style="transform:scaleX(0.8462);left:674px;top:4.72px;font-size:8.6px;color:#8e8e8e;font-weight:400;font-family:"Liberation Sans", sans-serif;-webkit-text-stroke:0">Règles de filtrage</span>
<svg style="left:1224px;top:5px" width="9" height="9" viewBox="0 0 9 9"><path d="M0.5 0.5 L8.5 8.5 M8.5 0.5 L0.5 8.5" stroke="#9a9a9a" stroke-width="1"/></svg>
<span id="t66" class="t" style="transform:scaleX(0.9100);left:679px;top:29.22px;font-size:8.6px;color:#e8e8ea;font-weight:400;font-family:"Liberation Sans", sans-serif;">Nom du f<u>i</u>ltre :</span>
<div style="left:733px;top:26.7px;width:497.5px;height:12.8px;background:#434348;border:1px solid #5c5c60;border-radius:3px;"></div>
<div style="left:736px;top:29.5px;width:70px;height:7px;background:#6a6a70;filter:blur(2px);border-radius:3px"></div>
<span id="t67" class="t" style="transform:scaleX(0.8746);left:806.6px;top:29.62px;font-size:8.6px;color:#e8e8ea;font-weight:400;font-family:"Liberation Sans", sans-serif;">@yahoo.com</span>
<div style="left:678.5px;top:51px;width:552px;height:100px;background:transparent;border:1px solid #3b3b3e;border-radius:3px;"></div>
<div style="left:681px;top:46px;width:70px;height:8px;background:#1c1b1e;"></div>
<span id="t68" class="t" style="transform:scaleX(0.8693);left:683px;top:44.12px;font-size:8.6px;color:#f0f0f2;font-weight:700;font-family:"Liberation Sans", sans-serif;">Appliquer le filtre :</span>
<div style="left:684px;top:57.5px;width:10px;height:10px;background:#2a8ff0;border-radius:1.5px"></div>
<svg style="left:684px;top:57.5px" width="10" height="10" viewBox="0 0 10 10"><path d="M2 5.2 L4.1 7.3 L8.2 2.8" fill="none" stroke="#fff" stroke-width="1.1"/></svg>
<span id="t69" class="t" style="transform:scaleX(0.8733);left:697.7px;top:58.02px;font-size:8.6px;color:#e8e8ea;font-weight:400;font-family:"Liberation Sans", sans-serif;">Lo<u>r</u>s de son exécution manuelle</span>
<div style="left:684px;top:74.3px;width:10px;height:10px;background:#2a8ff0;border-radius:1.5px"></div>
<svg style="left:684px;top:74.3px" width="10" height="10" viewBox="0 0 10 10"><path d="M2 5.2 L4.1 7.3 L8.2 2.8" fill="none" stroke="#fff" stroke-width="1.1"/></svg>
<span id="t70" class="t" style="transform:scaleX(0.8704);left:697.7px;top:75.02px;font-size:8.6px;color:#e8e8ea;font-weight:400;font-family:"Liberation Sans", sans-serif;"><u>L</u>ors de la réception du courrier :</span>
<div style="left:811.5px;top:71.3px;width:161.4px;height:15.1px;background:#2f2f33;border:1px solid #48484c;border-radius:2px;"></div>
<span id="t71" class="t" style="transform:scaleX(0.8682);left:817px;top:74.72px;font-size:8.6px;color:#e8e8ea;font-weight:400;font-family:"Liberation Sans", sans-serif;">Filtrer avant la vérification des indésirables</span>
<svg style="left:961px;top:76px" width="8" height="5" viewBox="0 0 8 5"><path d="M0.5 0.5 L4 4 L7.5 0.5" fill="none" stroke="#e0e0e2" stroke-width="1"/></svg>
<div style="left:684px;top:91.3px;width:10px;height:10px;background:#38383b;border:1px solid #4e4e52;border-radius:1.5px;"></div>
<span id="t72" class="t" style="transform:scaleX(0.8640);left:697.7px;top:91.82px;font-size:8.6px;color:#e8e8ea;font-weight:400;font-family:"Liberation Sans", sans-serif;">Lors de l'<u>a</u>rchivage</span>
<div style="left:684px;top:105.2px;width:10px;height:10px;background:#38383b;border:1px solid #4e4e52;border-radius:1.5px;"></div>
<span id="t73" class="t" style="transform:scaleX(0.8848);left:697.7px;top:106.22px;font-size:8.6px;color:#e8e8ea;font-weight:400;font-family:"Liberation Sans", sans-serif;">Aprè<u>s</u> l'envoi</span>
<div style="left:684px;top:118.8px;width:10px;height:10px;background:#38383b;border:1px solid #4e4e52;border-radius:1.5px;"></div>
<span id="t74" class="t" style="transform:scaleX(0.8749);left:697.7px;top:120.12px;font-size:8.6px;color:#e8e8ea;font-weight:400;font-family:"Liberation Sans", sans-serif;">Périodiq<u>u</u>ement, toutes les 10 minutes</span>
<div style="left:681.7px;top:156.6px;width:10.2px;height:10.2px;background:#2a8ff0;border-radius:50%"></div>
<div style="left:684.2px;top:159.1px;width:5.2px;height:5.2px;background:#ffffff;border-radius:50%"></div>
<span id="t75" class="t" style="transform:scaleX(0.8664);left:695.3px;top:156.52px;font-size:8.6px;color:#e8e8ea;font-weight:400;font-family:"Liberation Sans", sans-serif;">Valider <u>t</u>outes les conditions suivantes</span>
<div style="left:867px;top:156.6px;width:10.4px;height:10.4px;background:#3a3a3d;border:1px solid #4e4e52;border-radius:6px;"></div>
<span id="t76" class="t" style="transform:scaleX(0.8687);left:881px;top:156.52px;font-size:8.6px;color:#e8e8ea;font-weight:400;font-family:"Liberation Sans", sans-serif;">Valider a<u>u</u> moins une des conditions suivantes</span>
<div style="left:1052.6px;top:156.6px;width:10.6px;height:10.6px;background:#3a3a3d;border:1px solid #4e4e52;border-radius:6px;"></div>
<span id="t77" class="t" style="transform:scaleX(0.8542);left:1066.8px;top:156.52px;font-size:8.6px;color:#e8e8ea;font-weight:400;font-family:"Liberation Sans", sans-serif;">Appliquer à tous les <u>m</u>essages</span>
<div style="left:678.8px;top:169.6px;width:552.2px;height:81.5px;background:#414248;border:1px solid #5c5c60;border-radius:0px;"></div>
<div style="left:682.5px;top:172.8px;width:129.2px;height:14.4px;background:#3a3a3e;border:1px solid #505054;border-radius:2px;"></div>
<span id="t78" class="t" style="transform:scaleX(0.8636);left:688.0px;top:176.32px;font-size:8.6px;color:#e8e8ea;font-weight:400;font-family:"Liberation Sans", sans-serif;">De</span>
<svg style="left:800px;top:177.8px" width="8" height="5" viewBox="0 0 8 5"><path d="M0.5 0.5 L4 4 L7.5 0.5" fill="none" stroke="#e0e0e2" stroke-width="1"/></svg>
<div style="left:817.5px;top:172.8px;width:129.5px;height:14.4px;background:#3a3a3e;border:1px solid #505054;border-radius:2px;"></div>
<span id="t79" class="t" style="transform:scaleX(0.9632);left:823.0px;top:176.32px;font-size:8.6px;color:#e8e8ea;font-weight:400;font-family:"Liberation Sans", sans-serif;">contient</span>
<svg style="left:937px;top:177.8px" width="8" height="5" viewBox="0 0 8 5"><path d="M0.5 0.5 L4 4 L7.5 0.5" fill="none" stroke="#e0e0e2" stroke-width="1"/></svg>
<div style="left:952.5px;top:172.8px;width:224.1px;height:14.4px;background:#3f3f43;border:1px solid #55555a;border-radius:2px;"></div>
<div style="left:955px;top:176px;width:70px;height:7px;background:#626268;filter:blur(2px);border-radius:3px"></div>
<span id="t80" class="t" style="transform:scaleX(0.8746);left:1025.9px;top:175.92px;font-size:8.6px;color:#e8e8ea;font-weight:400;font-family:"Liberation Sans", sans-serif;">@yahoo.com</span>
<div style="left:1182px;top:172.2px;width:21.6px;height:15.5px;background:#38383e;border:1px solid #4c4c52;border-radius:2px;"></div>
<div style="left:1191px;top:179.5px;width:4px;height:1px;background:#e8e8ea;"></div>
<div style="left:1192.5px;top:178px;width:1px;height:4px;background:#e8e8ea;"></div>
<div style="left:1206.6px;top:172.2px;width:21.6px;height:15.5px;background:#434347;border:1px solid #4c4c50;border-radius:2px;"></div>
<div style="left:1214.5px;top:179.5px;width:5px;height:1px;background:#77777b;"></div>
<div style="left:672.5px;top:252.3px;width:559.5px;height:1.4px;background:#b8b8bc;"></div>
<div style="left:672.5px;top:253.7px;width:559.5px;height:1.4px;background:#2a2a2e;"></div>
<div style="left:672.5px;top:255.1px;width:559.5px;height:1px;background:#707074;"></div>
<span id="t81" class="t" style="transform:scaleX(0.8349);left:679.4px;top:257.72px;font-size:8.6px;color:#e8e8ea;font-weight:400;font-family:"Liberation Sans", sans-serif;">E<u>x</u>écuter ces actions :</span>
<div style="left:678.8px;top:269.3px;width:552.2px;height:84.2px;background:#414248;border:1px solid #5c5c60;border-radius:0px;"></div>
<div style="left:682.5px;top:272.2px;width:104.1px;height:14.4px;background:#3a3a3e;border:1px solid #505054;border-radius:2px;"></div>
<span id="t82" class="t" style="transform:scaleX(0.7960);left:688.0px;top:275.72px;font-size:8.6px;color:#e8e8ea;font-weight:400;font-family:"Liberation Sans", sans-serif;">Play Sound</span>
<svg style="left:775px;top:277.2px" width="8" height="5" viewBox="0 0 8 5"><path d="M0.5 0.5 L4 4 L7.5 0.5" fill="none" stroke="#e0e0e2" stroke-width="1"/></svg>
<div style="left:792px;top:272.2px;width:371.5px;height:14.4px;background:#3f3f43;border:1px solid #55555a;border-radius:2px;"></div>
<span id="t83" class="t" style="transform:scaleX(0.9010);left:795.3px;top:275.32px;font-size:8.6px;color:#e8e8ea;font-weight:400;font-family:"Liberation Sans", sans-serif;">C:\Users\manag\AppData\Roaming\Thunderbird\Profiles\j8qhhqtj.default-release-2\extensions\filtaquilla\ap</span>
<svg style="left:1167px;top:276px" width="11" height="9" viewBox="0 0 11 9"><path d="M0.6 8.4 V0.6 H4 L5 1.8 H10.4 V8.4 Z M0.6 3 H10.4" fill="none" stroke="#e8e8ea" stroke-width="1.1"/></svg>
<div style="left:1182px;top:272.8px;width:21.6px;height:15.2px;background:#38383e;border:1px solid #4c4c52;border-radius:2px;"></div>
<div style="left:1191px;top:280px;width:4px;height:1px;background:#e8e8ea;"></div>
<div style="left:1192.5px;top:278.5px;width:1px;height:4px;background:#e8e8ea;"></div>
<div style="left:1206.6px;top:272.8px;width:21.6px;height:15.2px;background:#434347;border:1px solid #4c4c50;border-radius:2px;"></div>
<div style="left:1214.5px;top:280px;width:5px;height:1px;background:#77777b;"></div>
<div style="left:1130.2px;top:374.7px;width:47.8px;height:15.3px;background:#2a8ae8;border-radius:2px"></div>
<span id="t84" class="t" style="transform:scaleX(0.8050);left:1149px;top:378.02px;font-size:8.6px;color:#ffffff;font-weight:400;font-family:"Liberation Sans", sans-serif;">OK</span>
<div style="left:1183px;top:374.7px;width:48px;height:15.3px;background:#2b2b2e;border:1px solid #48484c;border-radius:2px;"></div>
<span id="t85" class="t" style="transform:scaleX(0.9046);left:1193.5px;top:378.02px;font-size:8.6px;color:#e8e8ea;font-weight:400;font-family:"Liberation Sans", sans-serif;">Annuler</span>
<div style="left:669px;top:398.6px;width:563px;height:2px;background:#5a5a5d;"></div>
<div style="left:670px;top:400.5px;width:562px;height:188px;background:#ffffff;"></div>
<span id="t86" class="t" style="transform:scaleX(0.8300);left:675.2px;top:406.52px;font-size:8.6px;color:#9a9a9a;font-weight:400;font-family:"Liberation Sans", sans-serif;-webkit-text-stroke:0">Select a Sound File...</span>
<svg style="left:1221px;top:407px" width="8" height="8" viewBox="0 0 8 8"><path d="M0.3 0.3 L7.7 7.7 M7.7 0.3 L0.3 7.7" stroke="#8a8a8a" stroke-width="0.9"/></svg>
<svg style="left:678px;top:427px" width="10" height="8" viewBox="0 0 10 8"><path d="M9.5 4 H1 M4 1 L1 4 L4 7" fill="none" stroke="#c4c4c4" stroke-width="1"/></svg>
<svg style="left:697px;top:427px" width="10" height="8" viewBox="0 0 10 8"><path d="M0.5 4 H9 M6 1 L9 4 L6 7" fill="none" stroke="#c4c4c4" stroke-width="1"/></svg>
<svg style="left:713px;top:430px" width="6" height="4" viewBox="0 0 6 4"><path d="M0.5 0.5 L3 3 L5.5 0.5" fill="none" stroke="#c8c8c8" stroke-width="0.9"/></svg>
<svg style="left:724.5px;top:426.5px" width="9" height="9" viewBox="0 0 9 9"><path d="M4.5 9 V1 M1 4.3 L4.5 0.8 L8 4.3" fill="none" stroke="#3c3c3c" stroke-width="1.1"/></svg>
<div style="left:737.3px;top:424.2px;width:354.1px;height:13.6px;background:#ffffff;border:1px solid #d9d9d9;border-radius:0px;"></div>
<div style="left:740px;top:425.5px;width:9px;height:10.5px;background:#f9dc7e;border-radius:1px"></div>
<div style="left:740px;top:433px;width:9px;height:3px;background:#efc95c;"></div>
<span id="t87" class="t" style="transform:scaleX(1.2549);left:752px;top:426.02px;font-size:8.6px;color:#444;font-weight:400;font-family:"Liberation Sans", sans-serif;">«</span>
<span id="t88" class="t" style="transform:scaleX(0.8825);left:762.4px;top:426.72px;font-size:8.6px;color:#1e1e1e;font-weight:400;font-family:"Liberation Sans", sans-serif;">Thunderbird</span>
<span id="t89" class="t" style="transform:scaleX(1.0435);left:810px;top:426.02px;font-size:8.6px;color:#555;font-weight:400;font-family:"Liberation Sans", sans-serif;">›</span>
<span id="t90" class="t" style="transform:scaleX(0.8585);left:817.7px;top:426.72px;font-size:8.6px;color:#1e1e1e;font-weight:400;font-family:"Liberation Sans", sans-serif;">Profiles</span>
<span id="t91" class="t" style="transform:scaleX(1.0435);left:849px;top:426.02px;font-size:8.6px;color:#555;font-weight:400;font-family:"Liberation Sans", sans-serif;">›</span>
<span id="t92" class="t" style="transform:scaleX(0.8929);left:856px;top:426.72px;font-size:8.6px;color:#1e1e1e;font-weight:400;font-family:"Liberation Sans", sans-serif;">j8qhhqtj.default-release-2</span>
<span id="t93" class="t" style="transform:scaleX(1.0435);left:949px;top:426.02px;font-size:8.6px;color:#555;font-weight:400;font-family:"Liberation Sans", sans-serif;">›</span>
<span id="t94" class="t" style="transform:scaleX(0.8566);left:957.6px;top:426.72px;font-size:8.6px;color:#1e1e1e;font-weight:400;font-family:"Liberation Sans", sans-serif;">extensions</span>
<span id="t95" class="t" style="transform:scaleX(1.0435);left:998px;top:426.02px;font-size:8.6px;color:#555;font-weight:400;font-family:"Liberation Sans", sans-serif;">›</span>
<span id="t96" class="t" style="transform:scaleX(0.9237);left:1007.2px;top:426.72px;font-size:8.6px;color:#1e1e1e;font-weight:400;font-family:"Liberation Sans", sans-serif;">filtaquilla</span>
<svg style="left:1070px;top:429px" width="7" height="5" viewBox="0 0 7 5"><path d="M0.5 0.8 L3.5 3.8 L6.5 0.8" fill="none" stroke="#444" stroke-width="0.9"/></svg>
<div style="left:1079.3px;top:424.5px;width:1px;height:13px;background:#e0e0e0;"></div>
<svg style="left:1082px;top:426px" width="8" height="9" viewBox="0 0 8 9"><path d="M6.5 3.5 A3 3 0 1 1 4 2 M3.5 0.5 L4.5 2 L3 3.2" fill="none" stroke="#444" stroke-width="0.9"/></svg>
<div style="left:1099.5px;top:424.3px;width:127px;height:13px;background:#ffffff;border:1px solid #d9d9d9;border-radius:0px;"></div>
<span id="t97" class="t" style="transform:scaleX(0.8609);left:1105.2px;top:426.32px;font-size:8.6px;color:#6d6d6d;font-weight:400;font-family:"Liberation Sans", sans-serif;">Rechercher dans : filtaquilla</span>
<svg style="left:1214px;top:426.5px" width="8" height="9" viewBox="0 0 8 9"><circle cx="4.8" cy="3.2" r="2.6" fill="none" stroke="#444" stroke-width="0.9"/><path d="M3 5 L0.6 8.4" stroke="#444" stroke-width="1"/></svg>
<div style="left:670px;top:442px;width:562px;height:19.4px;background:#eff2f6;"></div>
<span id="t98" class="t" style="transform:scaleX(0.7950);left:681.6px;top:447.52px;font-size:8.6px;color:#1e395b;font-weight:400;font-family:"Liberation Sans", sans-serif;">Organiser</span>
<svg style="left:716px;top:450.5px" width="6" height="4" viewBox="0 0 6 4"><path d="M0 0 H6 L3 3.5 Z" fill="#1e395b"/></svg>
<span id="t99" class="t" style="transform:scaleX(0.8605);left:741.7px;top:447.52px;font-size:8.6px;color:#1e395b;font-weight:400;font-family:"Liberation Sans", sans-serif;">Nouveau dossier</span>
<svg style="left:1157px;top:447px" width="11" height="9" viewBox="0 0 11 9"><rect x="0" y="0.5" width="2.5" height="8" fill="#c9c9c9"/><path d="M3.5 1 H5 M6 1 H10.5 M3.5 4.5 H5 M6 4.5 H10.5 M3.5 8 H5 M6 8 H10.5" stroke="#777" stroke-width="1"/></svg>
<svg style="left:1174px;top:450px" width="6" height="4" viewBox="0 0 6 4"><path d="M0 0 H6 L3 3.5 Z" fill="#1e395b"/></svg>
<svg style="left:1192px;top:447px" width="11" height="10" viewBox="0 0 11 10"><rect x="0.5" y="0.5" width="10" height="9" fill="#fff" stroke="#5f6f82" stroke-width="1"/><rect x="6" y="1" width="4" height="8" fill="#4a90d9"/><rect x="1" y="1" width="4" height="8" fill="#dbe7f3"/></svg>
<svg style="left:1214.5px;top:446.5px" width="10.5" height="10.5" viewBox="0 0 11 11"><circle cx="5.5" cy="5.5" r="5.3" fill="#1b5fc1"/><text x="5.5" y="9" text-anchor="middle" font-family="Liberation Sans" font-weight="700" font-size="9" fill="#fff">?</text></svg>
<span id="t100" class="t" style="transform:scaleX(0.7986);left:680.8px;top:465.92px;font-size:8.6px;color:#4c607a;font-weight:400;font-family:"Liberation Sans", sans-serif;">Nom</span>
<svg style="left:721.5px;top:462px" width="6" height="4" viewBox="0 0 6 4"><path d="M0.5 3.5 L3 1 L5.5 3.5" fill="none" stroke="#777" stroke-width="0.9"/></svg>
<div style="left:771px;top:462px;width:1px;height:16px;background:#e5e5e5;"></div>
<div style="left:796.5px;top:462px;width:1px;height:16px;background:#e5e5e5;"></div>
<div style="left:896.8px;top:462px;width:1px;height:16px;background:#e5e5e5;"></div>
<div style="left:972.9px;top:462px;width:1px;height:16px;background:#e5e5e5;"></div>
<div style="left:1058.7px;top:462px;width:1px;height:16px;background:#e5e5e5;"></div>
<span id="t101" class="t" style="transform:scaleX(0.9113);left:775px;top:465.92px;font-size:8.6px;color:#4c607a;font-weight:400;font-family:"Liberation Sans", sans-serif;">N°</span>
<span id="t102" class="t" style="transform:scaleX(0.9007);left:800px;top:465.92px;font-size:8.6px;color:#4c607a;font-weight:400;font-family:"Liberation Sans", sans-serif;">Titre</span>
<span id="t103" class="t" style="transform:scaleX(0.8664);left:901.2px;top:465.92px;font-size:8.6px;color:#4c607a;font-weight:400;font-family:"Liberation Sans", sans-serif;">Interprètes ayant p...</span>
<span id="t104" class="t" style="transform:scaleX(0.9319);left:977px;top:465.92px;font-size:8.6px;color:#4c607a;font-weight:400;font-family:"Liberation Sans", sans-serif;">Album</span>
<div style="left:679px;top:481.4px;width:377.4px;height:13.4px;background:#e5f3ff;"></div>
<svg style="left:683px;top:483px" width="8" height="10" viewBox="0 0 8 10"><path d="M0.5 0.5 H5.5 L7.5 2.5 V9.5 H0.5 Z" fill="#fff" stroke="#9a9a9a" stroke-width="0.8"/><circle cx="4" cy="5.6" r="2" fill="none" stroke="#7a2a10" stroke-width="1.1"/></svg>
<span id="t105" class="t" style="transform:scaleX(0.8512);left:694.2px;top:483.92px;font-size:8.6px;color:#1e1e1e;font-weight:400;font-family:"Liberation Sans", sans-serif;">applause</span>
<svg style="left:683px;top:496px" width="8" height="10" viewBox="0 0 8 10"><path d="M0.5 0.5 H5.5 L7.5 2.5 V9.5 H0.5 Z" fill="#fff" stroke="#9a9a9a" stroke-width="0.8"/><circle cx="4" cy="5.6" r="2" fill="none" stroke="#7a2a10" stroke-width="1.1"/></svg>
<span id="t106" class="t" style="transform:scaleX(0.8588);left:694.2px;top:497.12px;font-size:8.6px;color:#1e1e1e;font-weight:400;font-family:"Liberation Sans", sans-serif;">duogourd</span>
<svg style="left:683px;top:509px" width="8" height="10" viewBox="0 0 8 10"><path d="M0.5 0.5 H5.5 L7.5 2.5 V9.5 H0.5 Z" fill="#fff" stroke="#9a9a9a" stroke-width="0.8"/><circle cx="4" cy="5.6" r="2" fill="none" stroke="#7a2a10" stroke-width="1.1"/></svg>
<span id="t107" class="t" style="transform:scaleX(0.8374);left:694.2px;top:510.32px;font-size:8.6px;color:#1e1e1e;font-weight:400;font-family:"Liberation Sans", sans-serif;">Freedom</span>
<svg style="left:683px;top:522px" width="8" height="10" viewBox="0 0 8 10"><path d="M0.5 0.5 H5.5 L7.5 2.5 V9.5 H0.5 Z" fill="#fff" stroke="#9a9a9a" stroke-width="0.8"/><circle cx="4" cy="5.6" r="2" fill="none" stroke="#7a2a10" stroke-width="1.1"/></svg>
<span id="t108" class="t" style="transform:scaleX(0.8903);left:694.2px;top:523.52px;font-size:8.6px;color:#1e1e1e;font-weight:400;font-family:"Liberation Sans", sans-serif;">hold-your-horses-4...</span>
<svg style="left:683px;top:536px" width="8" height="10" viewBox="0 0 8 10"><path d="M0.5 0.5 H5.5 L7.5 2.5 V9.5 H0.5 Z" fill="#fff" stroke="#9a9a9a" stroke-width="0.8"/><circle cx="4" cy="5.6" r="2" fill="none" stroke="#7a2a10" stroke-width="1.1"/></svg>
<span id="t109" class="t" style="transform:scaleX(0.6975);left:694.2px;top:536.72px;font-size:8.6px;color:#1e1e1e;font-weight:400;font-family:"Liberation Sans", sans-serif;">knock_458</span>
<div style="left:694px;top:492.2px;width:30px;height:0.8px;background:#555;"></div>
<div style="left:1224.7px;top:461px;width:7.3px;height:80px;background:#f0f0f0;"></div>
<svg style="left:1226px;top:465px" width="6" height="4" viewBox="0 0 6 4"><path d="M0.5 3.5 L3 1 L5.5 3.5" fill="none" stroke="#555" stroke-width="0.9"/></svg>
<div style="left:1225px;top:472.8px;width:7px;height:15px;background:#c2c2c2;"></div>
<svg style="left:1226px;top:534px" width="6" height="4" viewBox="0 0 6 4"><path d="M0.5 0.5 L3 3 L5.5 0.5" fill="none" stroke="#555" stroke-width="0.9"/></svg>
<div style="left:670px;top:541px;width:562px;height:47px;background:#f0f0f0;"></div>
<span id="t110" class="t" style="transform:scaleX(0.9055);left:752.2px;top:550.02px;font-size:8.6px;color:#1e1e1e;font-weight:400;font-family:"Liberation Sans", sans-serif;">Nom du fichier :</span>
<div style="left:809.9px;top:546.3px;width:287.7px;height:15.3px;background:#ffffff;border:1px solid #7a7a7a;border-radius:0px;"></div>
<span id="t111" class="t" style="transform:scaleX(0.8025);left:812.3px;top:550.32px;font-size:8.6px;color:#1e1e1e;font-weight:400;font-family:"Liberation Sans", sans-serif;">applause</span>
<svg style="left:1089px;top:552px" width="6" height="4" viewBox="0 0 6 4"><path d="M0.5 0.5 L3 3 L5.5 0.5" fill="none" stroke="#555" stroke-width="0.9"/></svg>
<div style="left:1105.2px;top:546.5px;width:118.3px;height:14.2px;background:#e5e5e5;border:1px solid #adadad;border-radius:0px;"></div>
<span id="t112" class="t" style="transform:scaleX(0.8770);left:1108px;top:550.32px;font-size:8.6px;color:#1e1e1e;font-weight:400;font-family:"Liberation Sans", sans-serif;">.wav, .ogg, .aiff</span>
<svg style="left:1213px;top:552px" width="6" height="4" viewBox="0 0 6 4"><path d="M0.5 0.5 L3 3 L5.5 0.5" fill="none" stroke="#555" stroke-width="0.9"/></svg>
<div style="left:1106px;top:565.2px;width:53.9px;height:14.9px;background:#e1e1e1;border:1px solid #adadad;border-radius:0px;"></div>
<span id="t113" class="t" style="transform:scaleX(0.9100);left:1122px;top:568.52px;font-size:8.6px;color:#1e1e1e;font-weight:400;font-family:"Liberation Sans", sans-serif;">Ouvrir</span>
<div style="left:1169px;top:565.2px;width:53.8px;height:14.9px;background:#e1e1e1;border:1px solid #adadad;border-radius:0px;"></div>
<span id="t114" class="t" style="transform:scaleX(0.8945);left:1182.5px;top:568.52px;font-size:8.6px;color:#1e1e1e;font-weight:400;font-family:"Liberation Sans", sans-serif;">Annuler</span>
<div style="left:665.5px;top:0px;width:4px;height:588px;background:#58585b;"></div>
</body></html>
